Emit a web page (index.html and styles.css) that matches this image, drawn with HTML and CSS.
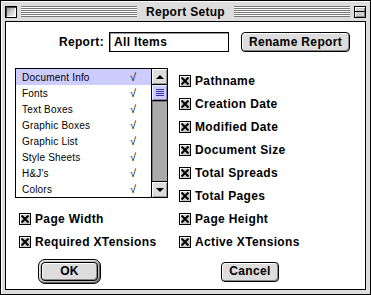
FILE: index.html
```html
<!DOCTYPE html>
<html>
<head>
<meta charset="utf-8">
<link rel="stylesheet" href="styles.css">
</head>
<body>
<div class="window">
  <div class="titlebar">
    <div class="closebox"></div>
    <div class="stripes"></div>
    <div class="title">Report Setup</div>
    <div class="stripes"></div>
    <div class="shadebox"><span></span></div>
  </div>
  <div class="content">
    <div class="report-row">
      <div class="report-label">Report:</div>
      <div class="field">All Items</div>
      <div class="btn rename">Rename Report</div>
    </div>
    <div class="main">
      <div class="left">
        <div class="list">
          <div class="rows">
            <div class="row sel"><span class="name">Document Info</span><span class="chk">√</span></div>
            <div class="row"><span class="name">Fonts</span><span class="chk">√</span></div>
            <div class="row"><span class="name">Text Boxes</span><span class="chk">√</span></div>
            <div class="row"><span class="name">Graphic Boxes</span><span class="chk">√</span></div>
            <div class="row"><span class="name">Graphic List</span><span class="chk">√</span></div>
            <div class="row"><span class="name">Style Sheets</span><span class="chk">√</span></div>
            <div class="row"><span class="name">H&amp;J's</span><span class="chk">√</span></div>
            <div class="row"><span class="name">Colors</span><span class="chk">√</span></div>
          </div>
          <div class="scrollbar">
            <div class="arrow up"><span></span></div>
            <div class="thumb"><span></span></div>
            <div class="track"></div>
            <div class="arrow down"><span></span></div>
          </div>
        </div>
        <div class="cbs">
          <div class="cb"><span class="box"><svg width="10" height="10" viewBox="0 0 10 10"><path d="M1.5 1.5 L8.5 8.5 M8.5 1.5 L1.5 8.5" stroke="#000" stroke-width="2"/></svg></span>Page Width</div>
          <div class="cb"><span class="box"><svg width="10" height="10" viewBox="0 0 10 10"><path d="M1.5 1.5 L8.5 8.5 M8.5 1.5 L1.5 8.5" stroke="#000" stroke-width="2"/></svg></span>Required XTensions</div>
        </div>
      </div>
      <div class="right">
        <div class="cb"><span class="box"><svg width="10" height="10" viewBox="0 0 10 10"><path d="M1.5 1.5 L8.5 8.5 M8.5 1.5 L1.5 8.5" stroke="#000" stroke-width="2"/></svg></span>Pathname</div>
        <div class="cb"><span class="box"><svg width="10" height="10" viewBox="0 0 10 10"><path d="M1.5 1.5 L8.5 8.5 M8.5 1.5 L1.5 8.5" stroke="#000" stroke-width="2"/></svg></span>Creation Date</div>
        <div class="cb"><span class="box"><svg width="10" height="10" viewBox="0 0 10 10"><path d="M1.5 1.5 L8.5 8.5 M8.5 1.5 L1.5 8.5" stroke="#000" stroke-width="2"/></svg></span>Modified Date</div>
        <div class="cb"><span class="box"><svg width="10" height="10" viewBox="0 0 10 10"><path d="M1.5 1.5 L8.5 8.5 M8.5 1.5 L1.5 8.5" stroke="#000" stroke-width="2"/></svg></span>Document Size</div>
        <div class="cb"><span class="box"><svg width="10" height="10" viewBox="0 0 10 10"><path d="M1.5 1.5 L8.5 8.5 M8.5 1.5 L1.5 8.5" stroke="#000" stroke-width="2"/></svg></span>Total Spreads</div>
        <div class="cb"><span class="box"><svg width="10" height="10" viewBox="0 0 10 10"><path d="M1.5 1.5 L8.5 8.5 M8.5 1.5 L1.5 8.5" stroke="#000" stroke-width="2"/></svg></span>Total Pages</div>
        <div class="cb"><span class="box"><svg width="10" height="10" viewBox="0 0 10 10"><path d="M1.5 1.5 L8.5 8.5 M8.5 1.5 L1.5 8.5" stroke="#000" stroke-width="2"/></svg></span>Page Height</div>
        <div class="cb"><span class="box"><svg width="10" height="10" viewBox="0 0 10 10"><path d="M1.5 1.5 L8.5 8.5 M8.5 1.5 L1.5 8.5" stroke="#000" stroke-width="2"/></svg></span>Active XTensions</div>
      </div>
    </div>
    <div class="buttons">
      <div class="ring"><div class="btn ok">OK</div></div>
      <div class="btn cancel">Cancel</div>
    </div>
  </div>
</div>
</body>
</html>
```
FILE: styles.css
```css
* { box-sizing: border-box; }
html, body { margin: 0; padding: 0; background: #fff; }
body { width: 371px; height: 295px; overflow: hidden; }

.window {
  width: 371px;
  height: 295px;
  border: 1px solid #000;
  background: #dddddd;
  box-shadow: inset 1px 1px 0 #fff;
  display: flex;
  flex-direction: column;
  padding: 0 4px 4px 4px;
  font-family: "Liberation Sans", Arial, sans-serif;
  font-weight: bold;
  font-size: 12px;
  letter-spacing: 0.35px;
  color: #000;
}

.titlebar {
  height: 20px;
  display: flex;
  align-items: center;
  gap: 4px;
  padding-top: 1px;
}
.closebox {
  width: 12px;
  height: 12px;
  border: 1px solid #000;
  background: linear-gradient(135deg, #888 0%, #ccc 50%, #fff 100%);
  box-shadow: inset 1px 1px 0 #444, inset -1px -1px 0 #fff;
  flex: none;
}
.stripes {
  flex: 1;
  height: 11px;
  background: repeating-linear-gradient(to bottom, #777 0 1px, #fff 1px 2px);
}
.title {
  padding: 0 5px;
  font-size: 12px;
  line-height: 16px;
  letter-spacing: 0.3px;
}
.shadebox {
  width: 12px;
  height: 12px;
  border: 1px solid #000;
  background: #ccc;
  box-shadow: inset 1px 1px 0 #fff, inset -1px -1px 0 #888;
  flex: none;
  display: flex;
  align-items: center;
}
.shadebox span {
  display: block;
  width: 100%;
  height: 1px;
  background: #000;
}

.content {
  flex: 1;
  background: #fff;
  border: 1px solid #000;
  display: flex;
  flex-direction: column;
}

.report-row {
  margin-top: 10px;
  height: 20px;
  display: flex;
  align-items: center;
}
.report-label {
  width: 98px;
  text-align: right;
}
.field {
  margin-left: 5px;
  width: 120px;
  height: 20px;
  border: 1px solid #000;
  box-shadow: inset 1px 1px 0 #999;
  padding: 2px 0 0 4px;
  line-height: 15px;
}

.btn {
  border: 1px solid #000;
  border-radius: 4px;
  background: #dddddd;
  box-shadow: inset 1px 1px 0 #fff, inset -1px -1px 0 #888;
  display: flex;
  align-items: center;
  justify-content: center;
  line-height: 15px;
}
.rename {
  margin-left: 12px;
  width: 109px;
  height: 20px;
}

.main {
  margin-top: 16px;
  display: grid;
  grid-template-columns: 173px 1fr;
}
.left {
  padding-left: 9px;
}
.list {
  width: 153px;
  height: 130px;
  border: 1px solid #000;
  display: flex;
  font-weight: normal;
  font-size: 10px;
  letter-spacing: 0.2px;
}
.rows {
  flex: 1;
}
.row {
  height: 16px;
  display: flex;
  align-items: center;
  padding-left: 6px;
}
.row.sel { background: #ccccff; }
.row .name { width: 108px; }
.row .chk { font-size: 11px; }

.scrollbar {
  width: 16px;
  border-left: 1px solid #000;
  display: flex;
  flex-direction: column;
  background: #aaa;
}
.arrow {
  height: 16px;
  background: #dddddd;
  box-shadow: inset 1px 1px 0 #fff, inset -1px -1px 0 #999;
  display: flex;
  align-items: center;
  justify-content: center;
  flex: none;
}
.arrow.up { border-bottom: 1px solid #000; }
.arrow.down { border-top: 1px solid #000; }
.arrow span {
  width: 0;
  height: 0;
  border-left: 4px solid transparent;
  border-right: 4px solid transparent;
}
.arrow.up span { border-bottom: 4px solid #000; }
.arrow.down span { border-top: 4px solid #000; }
.thumb {
  height: 16px;
  flex: none;
  background: #ccccff;
  border-bottom: 1px solid #000;
  box-shadow: inset 1px 1px 0 #eef, inset -1px -1px 0 #8888cc;
  display: flex;
  align-items: center;
  justify-content: center;
}
.thumb span {
  width: 8px;
  height: 7px;
  background: repeating-linear-gradient(to bottom, #333399 0 1px, transparent 1px 2px);
}
.track {
  flex: 1;
  background: #aaaaaa;
  box-shadow: inset 1px 1px 0 #777;
}

.cbs {
  margin-top: 9px;
  padding-left: 4px;
}
.right {
  padding-top: 1px;
}
.cb {
  height: 23px;
  display: flex;
  align-items: center;
  white-space: nowrap;
}
.box {
  width: 12px;
  height: 12px;
  border: 1px solid #000;
  background: #ccc;
  box-shadow: inset 1px 1px 0 #fff;
  margin-right: 4px;
  display: flex;
  align-items: center;
  justify-content: center;
  flex: none;
}
.box svg { display: block; }

.buttons {
  margin-top: 6px;
  display: flex;
  align-items: center;
}
.ring {
  margin-left: 32px;
  width: 63px;
  height: 25px;
  border: 1px solid #000;
  border-radius: 7px;
  background: #bbb;
  box-shadow: inset 1px 1px 0 #eee, inset -1px -1px 0 #666;
  padding: 2px;
}
.ok {
  width: 100%;
  height: 100%;
}
.cancel {
  margin-left: 120px;
  width: 58px;
  height: 20px;
}
```
